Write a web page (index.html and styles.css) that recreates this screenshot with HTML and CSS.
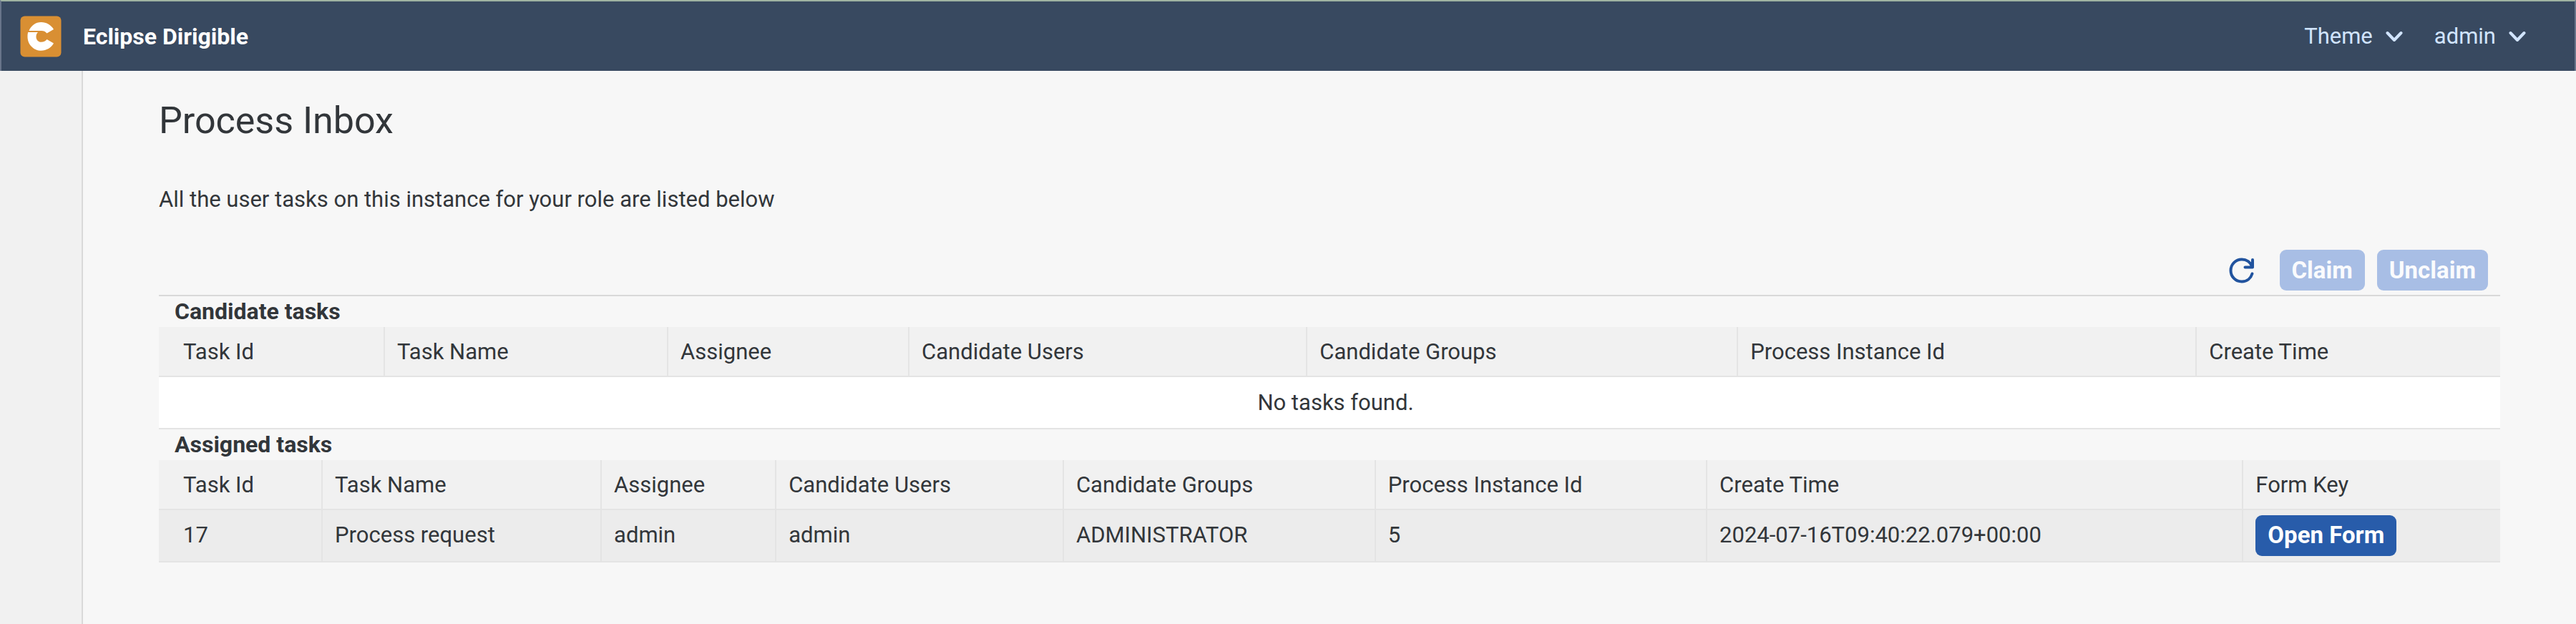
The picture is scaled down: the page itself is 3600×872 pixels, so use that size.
FILE: index.html
```html
<!DOCTYPE html>
<html lang="en">
<head>
<meta charset="utf-8">
<title>Process Inbox</title>
<link rel="stylesheet" href="styles.css">
</head>
<body>
<header class="shellbar">
  <svg class="logo" viewBox="0 0 58 58" aria-hidden="true">
    <rect x="0.500" y="0.500" width="57" height="57" rx="6" fill="#d98f33"/>
    <path d="M12.500 21C15.500 13.500 22 9 29.500 9C37 9 43.500 13 47 19L37.500 24.500C35.500 22 33 21 30 21Z" fill="#fff"/>
    <path d="M11.200 23H25C23 24.800 22.500 27 22.500 29.500C22.500 33.500 25.500 36.800 29.500 36.800C33 36.800 36 35 37.500 33L47 38.500C43.500 44.500 37 48.800 29.500 48.800C19 48.800 10.500 40 10.500 29.500C10.500 27 10.500 25.500 11.200 23Z" fill="#fff"/>
  </svg>
  <span class="brand">Eclipse Dirigible</span>
  <nav class="menus">
    <button class="menu" type="button">Theme
      <svg class="chevron" viewBox="0 0 24 16" aria-hidden="true"><path d="M2.500 3L12 13L21.500 3"/></svg>
    </button>
    <button class="menu" type="button">admin
      <svg class="chevron" viewBox="0 0 24 16" aria-hidden="true"><path d="M2.500 3L12 13L21.500 3"/></svg>
    </button>
  </nav>
</header>
<div class="shell">
  <aside class="sidebar"></aside>
  <main class="content">
    <h1 class="title">Process Inbox</h1>
    <p class="intro">All the user tasks on this instance for your role are listed below</p>
    <div class="toolbar">
      <button class="refresh" type="button" aria-label="Refresh">
        <svg class="refresh-icon" viewBox="0 0 38 38" aria-hidden="true"><path d="M34 4V14.500H23.500M33.500 13.500C31 7.500 25.500 3.500 19 3.500C10 3.500 3.500 10.500 3.500 19C3.500 27.500 10 34.500 19 34.500C26 34.500 31.500 30 33.500 23.500"/></svg>
      </button>
      <button class="button" type="button" disabled>Claim</button>
      <button class="button" type="button" disabled>Unclaim</button>
    </div>
    <h2 class="caption" id="candidate">Candidate tasks</h2>
    <table class="tasks" aria-labelledby="candidate">
      <colgroup><col class="c-id"><col class="c-name"><col class="c-assignee"><col class="c-users"><col class="c-groups"><col class="c-process"><col></colgroup>
      <thead>
        <tr><th>Task Id</th><th>Task Name</th><th>Assignee</th><th>Candidate Users</th><th>Candidate Groups</th><th>Process Instance Id</th><th>Create Time</th></tr>
      </thead>
      <tbody>
        <tr><td class="empty" colspan="7">No tasks found.</td></tr>
      </tbody>
    </table>
    <h2 class="caption" id="assigned">Assigned tasks</h2>
    <table class="tasks" aria-labelledby="assigned">
      <colgroup><col class="a-id"><col class="a-name"><col class="a-assignee"><col class="a-users"><col class="a-groups"><col class="a-process"><col class="a-time"><col></colgroup>
      <thead>
        <tr><th>Task Id</th><th>Task Name</th><th>Assignee</th><th>Candidate Users</th><th>Candidate Groups</th><th>Process Instance Id</th><th>Create Time</th><th>Form Key</th></tr>
      </thead>
      <tbody>
        <tr class="selected"><td>17</td><td>Process request</td><td>admin</td><td>admin</td><td>ADMINISTRATOR</td><td>5</td><td>2024-07-16T09:40:22.079+00:00</td><td><button class="button" type="button">Open Form</button></td></tr>
      </tbody>
    </table>
  </main>
</div>
</body>
</html>
```
FILE: styles.css
```css
* { box-sizing: border-box; }

body {
  margin: 0;
  min-height: 100vh;
  display: flex;
  flex-direction: column;
  background: #f7f7f7;
  color: #32363a;
  font: 31px/36px Roboto, "Liberation Sans", sans-serif;
}

button { font: inherit; cursor: pointer; }

.shellbar {
  display: flex;
  align-items: center;
  height: 99px;
  padding: 0 68px 0 26px;
  background: #384960;
  border-top: 2px solid #9fb3a2;
  border-left: 2px solid #68758a;
  border-right: 2px solid #68758a;
}

.logo { width: 58px; height: 58px; }

.brand {
  margin-left: 30px;
  color: #fff;
  font-size: 32px;
  font-weight: 700;
}

.menus {
  display: flex;
  gap: 44px;
  margin-left: auto;
}

.menu {
  display: flex;
  align-items: center;
  gap: 18px;
  padding: 0;
  border: 0;
  background: none;
  color: #d1e4ff;
}

.chevron {
  width: 24px;
  height: 16px;
  fill: none;
  stroke: #d1e4ff;
  stroke-width: 4;
  stroke-linecap: round;
  stroke-linejoin: round;
}

.shell { display: flex; flex: 1; }

.sidebar {
  flex: 0 0 116px;
  background: #f1f1f1;
  border-right: 2px solid #d9d9d9;
}

.content {
  flex: 1;
  min-width: 0;
  padding: 36px 106px 0;
}

.title {
  margin: 0;
  font-size: 52px;
  font-weight: 400;
  line-height: 68px;
}

.intro { margin: 58px 0 0; }

.toolbar {
  display: flex;
  justify-content: flex-end;
  align-items: center;
  gap: 17px;
  margin-top: 52px;
  padding: 0 17px 6px;
  border-bottom: 2px solid #d9d9d9;
}

.refresh {
  display: flex;
  margin-right: 17px;
  padding: 0;
  border: 0;
  background: none;
}

.refresh-icon {
  width: 38px;
  height: 38px;
  fill: none;
  stroke: #21539e;
  stroke-width: 4;
  stroke-linecap: round;
  stroke-linejoin: round;
}

.button {
  display: block;
  height: 57px;
  padding: 0 17px;
  border: 0;
  border-radius: 9px;
  background: #285caa;
  color: #fff;
  font-size: 33px;
  font-weight: 700;
}

.button:disabled {
  background: #a8bee5;
  color: #fafbfd;
  cursor: default;
}

.caption {
  margin: 0;
  padding: 3px 22px 4px;
  font-size: 32px;
  font-weight: 700;
  line-height: 36px;
}

.tasks {
  width: 100%;
  table-layout: fixed;
  border-collapse: separate;
  border-spacing: 0;
}

.tasks th,
.tasks td {
  padding: 0 17px;
  border-bottom: 2px solid #e4e4e4;
  border-right: 2px solid #e4e4e4;
  text-align: left;
  font-weight: 400;
  white-space: nowrap;
}

.tasks th { height: 70px; padding-top: 2px; background: #f1f1f1; }
.tasks td { height: 73px; background: #fff; }
.tasks .selected td { padding-bottom: 1px; background: #ececec; }
.tasks th:first-child, .tasks td:first-child { padding-left: 34px; }
.tasks th:last-child, .tasks td:last-child { border-right: 0; }
.tasks td.empty:first-child { padding: 0 0 0 17px; text-align: center; }

.c-id { width: 9.66%; }
.c-name { width: 12.1%; }
.c-assignee { width: 10.3%; }
.c-users { width: 17%; }
.c-groups { width: 18.4%; }
.c-process { width: 19.59%; }

.a-id { width: 7%; }
.a-name { width: 11.92%; }
.a-assignee { width: 7.46%; }
.a-users { width: 12.28%; }
.a-groups { width: 13.32%; }
.a-process { width: 14.16%; }
.a-time { width: 22.9%; }
```
